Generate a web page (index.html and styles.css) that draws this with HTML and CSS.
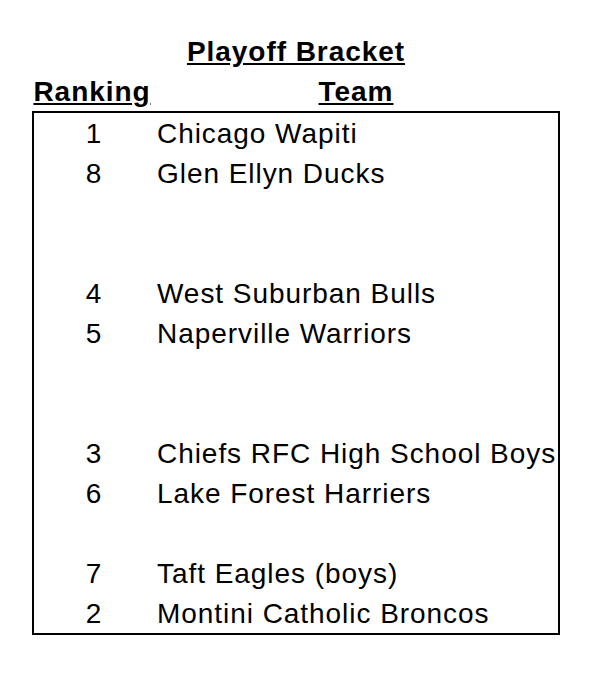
FILE: index.html
```html
<!DOCTYPE html>
<html>
<head>
<meta charset="utf-8">
<link rel="stylesheet" href="styles.css">
</head>
<body>
<div class="bracket">
  <div class="title">Playoff Bracket</div>
  <div class="heads">
    <div class="head rank-head">Ranking</div>
    <div class="head team-head">Team</div>
  </div>
  <div class="box">
    <div class="row"><div class="rank">1</div><div class="team">Chicago Wapiti</div></div>
    <div class="row"><div class="rank">8</div><div class="team">Glen Ellyn Ducks</div></div>
    <div class="row"></div>
    <div class="row"></div>
    <div class="row"><div class="rank">4</div><div class="team">West Suburban Bulls</div></div>
    <div class="row"><div class="rank">5</div><div class="team">Naperville Warriors</div></div>
    <div class="row"></div>
    <div class="row"></div>
    <div class="row"><div class="rank">3</div><div class="team">Chiefs RFC High School Boys</div></div>
    <div class="row"><div class="rank">6</div><div class="team">Lake Forest Harriers</div></div>
    <div class="row"></div>
    <div class="row"><div class="rank">7</div><div class="team">Taft Eagles (boys)</div></div>
    <div class="row"><div class="rank">2</div><div class="team">Montini Catholic Broncos</div></div>
  </div>
</div>
</body>
</html>
```
FILE: styles.css
```css
html, body {
  margin: 0;
  padding: 0;
  background: #fff;
}
body {
  font-family: "Liberation Sans", Arial, sans-serif;
  font-size: 28px;
  letter-spacing: 0.95px;
  color: #000;
}
.bracket {
  width: 528px;
  margin-left: 32px;
  padding-top: 36px;
}
.title {
  text-align: center;
  font-weight: bold;
  text-decoration: underline;
  line-height: 32px;
  height: 32px;
}
.heads {
  display: grid;
  grid-template-columns: 120px 1fr;
  margin-top: 8px;
  height: 35px;
  line-height: 32px;
}
.head {
  font-weight: bold;
  text-decoration: underline;
  text-align: center;
}
.box {
  border: 2px solid #000;
  height: 520px;
}
.row {
  display: grid;
  grid-template-columns: 120px 1fr;
  height: 40px;
  line-height: 42px;
}
.rank {
  text-align: center;
}
.team {
  padding-left: 3px;
  white-space: nowrap;
}
```
